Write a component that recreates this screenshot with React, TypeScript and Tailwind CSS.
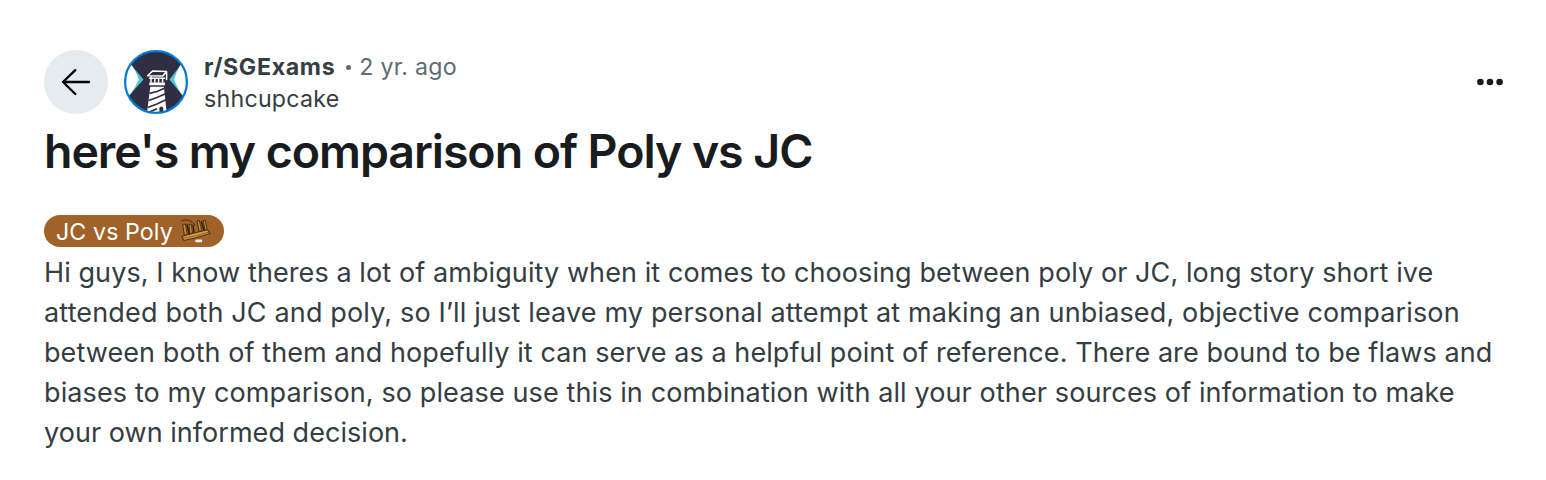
const lines = [
  { text: "Hi guys, I know theres a lot of ambiguity when it comes to choosing between poly or JC, long story short ive", tracking: "tracking-[0.09px]" },
  { text: "attended both JC and poly, so I’ll just leave my personal attempt at making an unbiased, objective comparison", tracking: "tracking-[0.155px]" },
  { text: "between both of them and hopefully it can serve as a helpful point of reference. There are bound to be flaws and", tracking: "tracking-[0.08px]" },
  { text: "biases to my comparison, so please use this in combination with all your other sources of information to make", tracking: "tracking-[0.115px]" },
  { text: "your own informed decision.", tracking: "tracking-[0.04px]" },
];

function BackIcon() {
  return (
    <svg className="size-8" viewBox="0 0 32 32" fill="none" stroke="#000" strokeWidth="2.3" strokeLinecap="round" strokeLinejoin="round">
      <path d="M29 16H3M15.3 4.1 3 16l12.3 12" />
    </svg>
  );
}

function MoreIcon() {
  return (
    <svg className="h-8 w-8" viewBox="0 0 32 32" fill="#181c1f">
      <circle cx="6.4" cy="16" r="3.3" />
      <circle cx="16" cy="16" r="3.3" />
      <circle cx="25.6" cy="16" r="3.3" />
    </svg>
  );
}

function Avatar() {
  return (
    <svg className="size-16 shrink-0" viewBox="0 0 64 64">
      <defs>
        <clipPath id="disc"><circle cx="32" cy="32" r="31" /></clipPath>
      </defs>
      <g clipPath="url(#disc)">
        <rect width="64" height="64" fill="#302e42" />
        <path d="M0 7 8.5 16.5 19.5 29.5 7 43.5 0 51Z M64 7 55.5 16.5 45.5 29.5 57 43.5 64 51Z" fill="#4fc5d9" />
        <path d="M0 7 8.5 16.5Q13 23 14.8 29.5 11.5 37 7 43.5L0 51Z M64 7 55.5 16.5Q52 23 50 29.5 53 37 57 43.5L64 51Z" fill="#fff" />
        <path d="M26.3 36.8h13.6L42.8 64H22.8Z M25.3 32.5h15.6v2.8H25.3Z" fill="#fff" />
        <path d="M25.5 43.4 33 41.5 41 38M24.5 50.5 33 47.5 42 43.5M23.5 57.5 33 54 42.5 49.5M22 63.5 33 58.8" stroke="#302e42" strokeWidth="1.6" fill="none" />
        <path d="M35.4 64v-5.5a1.9 1.9 0 0 1 3.8 0V64Z" fill="#302e42" />
        <path d="M23.6 25.8 28.6 21 42.6 21.4 38.8 26Z M42.6 21.6v8M27 26.5v5.5M30.8 28v4M34.6 28v4M38.6 28v4M25.5 28.2h15" fill="none" stroke="#fff" strokeWidth="1.5" strokeLinejoin="round" strokeLinecap="round" />
      </g>
      <circle cx="32" cy="32" r="30.9" fill="none" stroke="#0079d3" strokeWidth="2.2" />
    </svg>
  );
}

function BenchIcon() {
  return (
    <svg className="h-8 w-8 shrink-0" viewBox="0 0 32 32" fill="none" strokeLinejoin="round" strokeLinecap="round">
      <path d="M3 9.8 5.4 9 7.3 19.5 4.8 20.2Z M9.5 9.5 11.3 9 12.4 18 10.2 18.5Z M17.3 6 19.2 5.4 21.8 15.5 19.6 16.3Z M23.4 5.6 25.2 5.2 27.2 15 25.5 15.5Z" fill="#c98835" stroke="#21180f" strokeWidth="0.7" />
      <path d="M7 9.5 9 18.5M13 10 14 17.5M21.3 6.5 24 15.5" stroke="#21180f" strokeWidth="1.2" />
      <path d="M1.5 5.8C6 3.6 13 5.5 15 10.5" stroke="#3a2412" strokeWidth=".8" />
      <path d="M2.5 21.2 13 18.3 27.5 14.8 30 18.4 16 22.8 4 25.4Z" fill="#d39a43" stroke="#3a260f" strokeWidth=".9" />
      <path d="M3.5 23.2 15 21 29.5 17" stroke="#6b4219" strokeWidth=".6" />
      <rect x="15.2" y="24.6" width="7" height="2.6" rx="1.2" fill="#f2eee9" />
    </svg>
  );
}

export default function App() {
  return (
    <main className="h-[480px] w-[1546px] overflow-hidden bg-white px-11 pt-[50px] font-['Inter',sans-serif] text-[#333d42]">
      <header className="flex h-16 items-center">
        <button aria-label="Back" className="flex size-16 shrink-0 items-center justify-center rounded-full bg-[#e5ebee]">
          <BackIcon />
        </button>
        <div className="ml-4 flex"><Avatar /></div>
        <div className="ml-4 flex-1 pt-[2px] text-[23.2px] leading-8 whitespace-nowrap">
          <div className="flex items-center">
            <span className="font-bold tracking-[0.65px]">r/SGExams</span>
            <span className="ml-[11px] size-[5px] rounded-full bg-[#5c6c74]" />
            <span className="ml-2 tracking-[0.27px] text-[#5c6c74]">2 yr. ago</span>
          </div>
          <div className="tracking-[0.25px]">shhcupcake</div>
        </div>
        <button aria-label="More options" className="-mr-1">
          <MoreIcon />
        </button>
      </header>
      <h1 className="mt-[7px] h-[61px] text-[46.5px] leading-[60px] font-semibold tracking-[-1.06px] whitespace-nowrap text-[#181c1f]">
        <span>here's my comparison of Poly vs JC</span>
      </h1>
      <div className="mt-[33px] flex h-8 w-[180px] items-center rounded-full bg-[#a06228] pl-3 text-[23.2px] leading-8 whitespace-nowrap text-white">
        <span className="w-[124px] pt-px tracking-[0.1px]">JC vs Poly</span>
        <BenchIcon />
      </div>
      <div className="mt-[6px] text-[27px] leading-10 whitespace-nowrap">
        {lines.map((line) => (
          <p key={line.text} className={line.tracking}>{line.text}</p>
        ))}
      </div>
    </main>
  );
}
